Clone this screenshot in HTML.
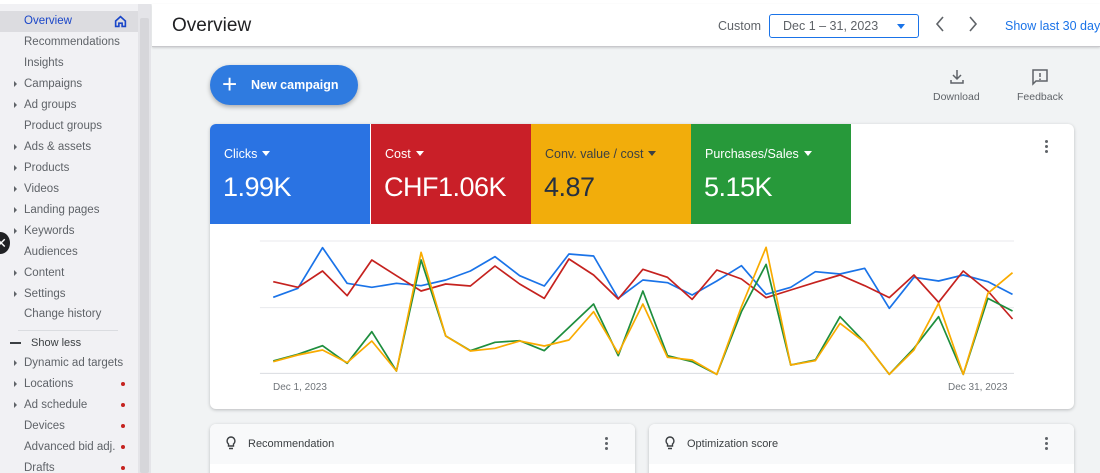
<!DOCTYPE html>
<html><head><meta charset="utf-8"><style>
*{box-sizing:border-box;margin:0;padding:0}
html,body{width:1100px;height:473px;overflow:hidden}
body{font-family:"Liberation Sans",sans-serif;background:#f1f3f4;position:relative}
.abs{position:absolute}
#side{left:0;top:4px;width:138px;height:469px;background:#f1f1f4}
#sb{left:138px;top:4px;width:13px;height:469px;background:#e4e4e8}
#sbt{left:140px;top:18px;width:9px;height:455px;background:#d6d6da;border-radius:2px}
.it{position:absolute;left:24px;font-size:11.5px;color:#5f6368;white-space:nowrap}
.ar{position:absolute;left:14px;width:0;height:0;border-top:3px solid transparent;border-bottom:3px solid transparent;border-left:3px solid #5f6368}
.dot{position:absolute;left:121px;width:4px;height:4px;border-radius:2px;background:#c5221f}
#hdr{left:152px;top:4px;width:948px;height:43px;background:#fff;border-bottom:1px solid #c8c8cc;box-shadow:0 1px 2px rgba(0,0,0,.15)}
.card{background:#fff;border-radius:6px;box-shadow:0 1px 3px rgba(60,64,67,.3)}
.tile{position:absolute;top:0;height:100px;color:#fff}
.tile .l{position:absolute;left:14px;top:23px;font-size:12.5px}
.tile .v{position:absolute;left:13px;top:48px;font-size:27px;letter-spacing:-0.5px}
.tri{display:inline-block;width:0;height:0;border-left:4px solid transparent;border-right:4px solid transparent;border-top:5px solid currentColor;margin-left:5px;vertical-align:2px}
.vd{position:absolute;width:3px;height:3px;border-radius:2px;background:#5f6368}
</style></head><body>
<div class="abs" style="left:0;top:0;width:1100px;height:4px;background:#fff"></div>
<div class="abs" id="side">
<div class="abs" style="left:0;top:7px;width:138px;height:21px;background:#dcdce0"></div>
</div>
<div class="abs" id="sb"></div><div class="abs" id="sbt"></div>
<div class="it" style="top:15px;color:#1a46c8">Overview</div>
<svg class="abs" style="left:114px;top:15px" width="13" height="13" viewBox="0 0 24 24"><path d="M3 11L12 3l9 8v10h-6v-6h-6v6H3z" fill="none" stroke="#1a46c8" stroke-width="3"/></svg>
<div class="it" style="top:36px">Recommendations</div>
<div class="it" style="top:57px">Insights</div>
<div class="ar" style="top:81px"></div><div class="it" style="top:78px">Campaigns</div>
<div class="ar" style="top:102px"></div><div class="it" style="top:99px">Ad groups</div>
<div class="it" style="top:120px">Product groups</div>
<div class="ar" style="top:144px"></div><div class="it" style="top:141px">Ads &amp; assets</div>
<div class="ar" style="top:165px"></div><div class="it" style="top:162px">Products</div>
<div class="ar" style="top:186px"></div><div class="it" style="top:183px">Videos</div>
<div class="ar" style="top:207px"></div><div class="it" style="top:204px">Landing pages</div>
<div class="ar" style="top:228px"></div><div class="it" style="top:225px">Keywords</div>
<div class="it" style="top:246px">Audiences</div>
<div class="ar" style="top:270px"></div><div class="it" style="top:267px">Content</div>
<div class="ar" style="top:291px"></div><div class="it" style="top:288px">Settings</div>
<div class="it" style="top:308px">Change history</div>
<div class="abs" style="left:18px;top:330px;width:100px;height:1px;background:#dadce0"></div>
<div class="abs" style="left:10px;top:342px;width:11px;height:1.5px;background:#3c4043"></div>
<div class="it" style="left:31px;top:337px;font-size:11px;color:#3c4043">Show less</div>
<div class="ar" style="top:360px"></div><div class="it" style="top:357px">Dynamic ad targets</div>
<div class="ar" style="top:381px"></div><div class="it" style="top:378px">Locations</div><div class="dot" style="top:382px"></div>
<div class="ar" style="top:402px"></div><div class="it" style="top:399px">Ad schedule</div><div class="dot" style="top:403px"></div>
<div class="it" style="top:420px">Devices</div><div class="dot" style="top:424px"></div>
<div class="it" style="top:441px">Advanced bid adj.</div><div class="dot" style="top:445px"></div>
<div class="it" style="top:462px">Drafts</div><div class="dot" style="top:466px"></div>
<div class="abs" style="left:-9px;top:232px;width:19px;height:22px;border-radius:50%;background:#202124;color:#fff;font-size:14px;line-height:22px;text-align:right;padding-right:3px">✕</div>

<div class="abs" id="hdr">
<div class="abs" style="left:20px;top:11px;font-size:19px;color:#202124">Overview</div>
<div class="abs" style="left:566px;top:15px;font-size:12.5px;color:#5f6368">Custom</div>
<div class="abs" style="left:617px;top:10px;width:150px;height:24px;border:1px solid #1a73e8;border-radius:3px">
<div class="abs" style="left:13px;top:4px;font-size:12.5px;color:#5f6368">Dec 1 – 31, 2023</div>
<div class="abs" style="left:127px;top:9px;border-left:4px solid transparent;border-right:4px solid transparent;border-top:5px solid #1a73e8"></div></div>
<svg class="abs" style="left:782px;top:12px" width="12" height="16" viewBox="0 0 12 16"><path d="M9 1L3 8l6 7" fill="none" stroke="#5f6368" stroke-width="1.6"/></svg>
<svg class="abs" style="left:815px;top:12px" width="12" height="16" viewBox="0 0 12 16"><path d="M3 1l6 7-6 7" fill="none" stroke="#5f6368" stroke-width="1.6"/></svg>
<div class="abs" style="left:853px;top:15px;font-size:12.5px;color:#1a73e8;white-space:nowrap">Show last 30 days</div>
</div>

<div class="abs" style="left:210px;top:65px;width:148px;height:40px;border-radius:20px;background:#2f7be0;box-shadow:0 2px 5px rgba(0,0,0,.3);color:#fff">
<div class="abs" style="left:12px;top:5px;font-size:26px;line-height:28px;font-weight:300">+</div>
<div class="abs" style="left:41px;top:13px;font-size:12.5px;font-weight:bold">New campaign</div></div>
<svg class="abs" style="left:949px;top:69px" width="16" height="16" viewBox="0 0 16 16"><path d="M8 1v9M4 6l4 4 4-4M2 11v3h12v-3" fill="none" stroke="#5f6368" stroke-width="1.5"/></svg>
<div class="abs" style="left:933px;top:91px;font-size:10.5px;color:#5f6368">Download</div>
<svg class="abs" style="left:1031px;top:68px" width="18" height="18" viewBox="0 0 18 18"><path d="M2 2h14v11H5l-3 3z" fill="none" stroke="#5f6368" stroke-width="1.5"/><path d="M9 5v4M9 10.5v1.5" stroke="#5f6368" stroke-width="1.5"/></svg>
<div class="abs" style="left:1017px;top:91px;font-size:10.5px;color:#5f6368">Feedback</div>

<div class="abs card" style="left:210px;top:124px;width:864px;height:285px;overflow:hidden">
<div class="tile" style="left:0;width:160px;background:#2a73e3"><div class="l">Clicks<span class="tri"></span></div><div class="v">1.99K</div></div>
<div class="tile" style="left:161px;width:160px;background:#c91f28"><div class="l">Cost<span class="tri"></span></div><div class="v">CHF1.06K</div></div>
<div class="tile" style="left:321px;width:160px;background:#f2ad0b;color:#3c4043"><div class="l">Conv. value / cost<span class="tri"></span></div><div class="v" style="color:#263040">4.87</div></div>
<div class="tile" style="left:481px;width:160px;background:#27993a"><div class="l">Purchases/Sales<span class="tri"></span></div><div class="v">5.15K</div></div>
<div class="vd" style="left:835px;top:16px"></div><div class="vd" style="left:835px;top:21px"></div><div class="vd" style="left:835px;top:26px"></div>
</div>
<svg class="abs" style="left:255px;top:235px" width="759" height="165" viewBox="0 0 1540 495" preserveAspectRatio="none">
<g stroke="#e8eaed" stroke-width="1"><line x1="10" y1="18" x2="1540" y2="18" vector-effect="non-scaling-stroke"/><line x1="10" y1="218" x2="1540" y2="218" vector-effect="non-scaling-stroke"/><line x1="10" y1="415" x2="1540" y2="415" stroke="#dadce0" vector-effect="non-scaling-stroke"/></g>
<g fill="none" stroke-width="1.7" stroke-linejoin="round">
<polyline vector-effect="non-scaling-stroke" stroke="#1a73e8" points="37,187 87,160 137,38 187,145 237,157 287,145 337,152 387,135 437,108 487,65 537,122 587,153 637,57 687,63 737,190 787,135 837,143 887,180 937,138 987,92 1037,178 1087,157 1137,110 1187,117 1237,100 1287,220 1337,127 1387,138 1437,120 1487,140 1537,178"/>
<polyline vector-effect="non-scaling-stroke" stroke="#c5221f" points="37,140 87,157 137,108 187,182 237,75 287,122 337,168 387,147 437,153 487,93 537,147 587,190 637,72 687,120 737,192 787,103 837,127 887,193 937,105 987,132 1037,188 1087,165 1137,142 1187,120 1237,152 1287,188 1337,120 1387,202 1437,108 1487,168 1537,252"/>
<polyline vector-effect="non-scaling-stroke" stroke="#1e8e3e" points="37,378 87,358 137,332 187,385 237,290 287,408 337,75 387,303 437,347 487,322 537,317 587,347 637,277 687,207 737,362 787,168 837,362 887,380 937,418 987,230 1037,88 1087,390 1137,375 1187,245 1237,322 1287,418 1337,340 1387,245 1437,418 1487,190 1537,228"/>
<polyline vector-effect="non-scaling-stroke" stroke="#f9ab00" points="37,380 87,360 137,345 187,383 237,318 287,408 337,52 387,303 437,348 487,340 537,318 587,333 637,315 687,230 737,355 787,207 837,367 887,375 937,418 987,215 1037,37 1087,390 1137,377 1187,265 1237,322 1287,418 1337,345 1387,205 1437,418 1487,175 1537,113"/>
</g></svg>
<div class="abs" style="left:273px;top:382px;font-size:10px;color:#70757a">Dec 1, 2023</div>
<div class="abs" style="left:948px;top:382px;font-size:10px;color:#70757a">Dec 31, 2023</div>

<div class="abs card" style="left:210px;top:424px;width:425px;height:60px;overflow:hidden">
<div class="abs" style="left:0;top:0;width:425px;height:40px;background:#f8f9fa"></div>
<svg class="abs" style="left:16px;top:12px" width="10" height="15" viewBox="0 0 10 15"><path d="M5 1a4 4 0 0 0-2.5 7v2h5V8A4 4 0 0 0 5 1zM3 12.5h4" fill="none" stroke="#3c4043" stroke-width="1.4"/></svg>
<div class="abs" style="left:38px;top:14px;font-size:11px;color:#3c4043">Recommendation</div>
<div class="vd" style="left:395px;top:13px"></div><div class="vd" style="left:395px;top:18px"></div><div class="vd" style="left:395px;top:23px"></div>
</div>
<div class="abs card" style="left:649px;top:424px;width:425px;height:60px;overflow:hidden">
<div class="abs" style="left:0;top:0;width:425px;height:40px;background:#f8f9fa"></div>
<svg class="abs" style="left:16px;top:12px" width="10" height="15" viewBox="0 0 10 15"><path d="M5 1a4 4 0 0 0-2.5 7v2h5V8A4 4 0 0 0 5 1zM3 12.5h4" fill="none" stroke="#3c4043" stroke-width="1.4"/></svg>
<div class="abs" style="left:38px;top:14px;font-size:11px;color:#3c4043">Optimization score</div>
<div class="vd" style="left:396px;top:13px"></div><div class="vd" style="left:396px;top:18px"></div><div class="vd" style="left:396px;top:23px"></div>
</div>
</body></html>
